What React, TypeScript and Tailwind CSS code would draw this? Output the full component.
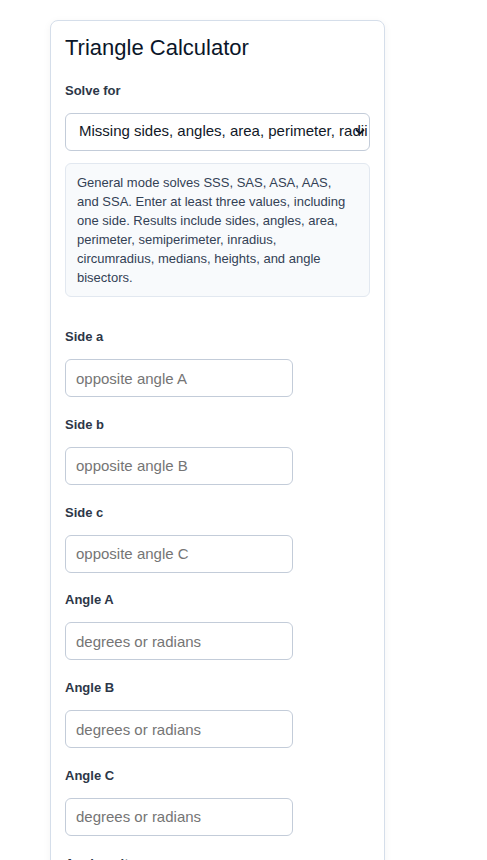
import { useState } from "react";

const fields = [
  { id: "a", label: "Side a", placeholder: "opposite angle A" },
  { id: "b", label: "Side b", placeholder: "opposite angle B" },
  { id: "c", label: "Side c", placeholder: "opposite angle C" },
  { id: "A", label: "Angle A", placeholder: "degrees or radians" },
  { id: "B", label: "Angle B", placeholder: "degrees or radians" },
  { id: "C", label: "Angle C", placeholder: "degrees or radians" },
];

const Chevron = () => (
  <svg
    className="pointer-events-none absolute right-[5px] top-[15px] h-[7px] w-[10px]"
    viewBox="0 0 10 7"
    fill="none"
  >
    <path d="M1 1.5 L5 5.5 L9 1.5" stroke="#111827" strokeWidth="1.8" />
  </svg>
);

const App = () => {
  const [mode, setMode] = useState("general");
  const [values, setValues] = useState<Record<string, string>>({});

  return (
    <div className="min-h-screen bg-white font-['Liberation_Sans',Arial,sans-serif]">
      <div className="ml-[50px] pt-[20px]">
        <div className="w-[335px] rounded-lg border border-[#d5deea] bg-white px-[14px] pt-[14px] pb-6 shadow-[0_2px_8px_rgba(15,23,42,0.05)]">
          <h1 className="text-[22px] leading-[26px] font-normal text-[#0b1629]">
            Triangle Calculator
          </h1>

          <label className="mt-[19.5px] block text-[13px] leading-[20px] font-bold text-[#2d3748]">
            Solve for
          </label>
          <div className="relative mt-[12px]">
            <select
              value={mode}
              onChange={(e) => setMode(e.target.value)}
              className="block h-[38px] w-full appearance-none overflow-hidden rounded-md border border-[#c3ccd9] bg-white pl-[13px] pr-0 text-[15px] whitespace-nowrap text-[#111827] outline-none"
            >
              <option value="general">
                Missing sides, angles, area, perimeter, radii
              </option>
              <option value="right">Right triangle</option>
            </select>
            <Chevron />
          </div>

          <div className="mt-[12px] rounded-md border border-[#e2e8f0] bg-[#f8fafc] pl-[11px] pr-[18px] pt-[9px] pb-[9px] text-[13px] leading-[19.1px] text-[#334155]">
            General mode solves SSS, SAS, ASA, AAS, and SSA. Enter at least
            three values, including one side. Results include sides, angles,
            area, perimeter, semiperimeter, inradius, circumradius, medians,
            heights, and angle bisectors.
          </div>

          <div className="mt-[30px] flex flex-col gap-[17.75px]">
            {fields.map((f) => (
              <div key={f.id}>
                <label className="block text-[13px] leading-[20px] font-bold text-[#2d3748]">
                  {f.label}
                </label>
                <input
                  type="text"
                  placeholder={f.placeholder}
                  value={values[f.id] ?? ""}
                  onChange={(e) =>
                    setValues({ ...values, [f.id]: e.target.value })
                  }
                  className="mt-[12px] block h-[38px] w-[228px] rounded-md border border-[#c3ccd9] bg-white px-[10px] text-[15px] text-[#111827] placeholder:text-[#757575] outline-none"
                />
              </div>
            ))}
            <div>
              <label className="block text-[13px] leading-[20px] font-bold text-[#2d3748]">
                Angle unit
              </label>
              <select className="mt-[12px] block h-[38px] w-[228px] rounded-md border border-[#c3ccd9] bg-white pl-[10px] text-[15px] text-[#111827]">
                <option>Degrees</option>
                <option>Radians</option>
              </select>
            </div>
          </div>
        </div>
      </div>
    </div>
  );
};

export default App;
